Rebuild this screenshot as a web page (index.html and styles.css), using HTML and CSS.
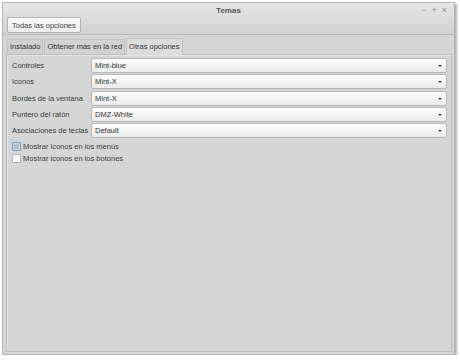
FILE: index.html
```html
<!DOCTYPE html>
<html lang="es">
<head>
  <meta charset="UTF-8">
  <title>Temas</title>
  <link rel="stylesheet" href="styles.css">
</head>
<body>
  <div class="window">
    <div class="header">
      <div class="titlebar">
        <span class="title">Temas</span>
        <div class="controls">
          <span>&minus;</span>
          <span>+</span>
          <span>&times;</span>
        </div>
      </div>
      <div class="toolbar">
        <button class="button">Todas las opciones</button>
      </div>
    </div>
    <div class="body">
      <div class="tabs">
        <div class="tab">Instalado</div>
        <div class="tab">Obtener más en la red</div>
        <div class="tab active">Otras opciones</div>
      </div>
      <div class="panel">
        <div class="form">
          <label>Controles</label>
          <div class="combo">Mint-blue<span class="arrow"></span></div>
          <label>Iconos</label>
          <div class="combo">Mint-X<span class="arrow"></span></div>
          <label>Bordes de la ventana</label>
          <div class="combo">Mint-X<span class="arrow"></span></div>
          <label>Puntero del ratón</label>
          <div class="combo">DMZ-White<span class="arrow"></span></div>
          <label>Asociaciones de teclas</label>
          <div class="combo">Default<span class="arrow"></span></div>
        </div>
        <div class="checks">
          <div class="check"><span class="box checked"></span>Mostrar iconos en los menús</div>
          <div class="check"><span class="box"></span>Mostrar iconos en los botones</div>
        </div>
      </div>
    </div>
  </div>
</body>
</html>
```

FILE: styles.css
```css
body {
  margin: 0;
  background-color: #fff;
  font-family: "Liberation Sans", Arial, sans-serif;
  font-size: 7.5px;
  color: #3c3c3c;
}
.window {
  margin: 2px 0 0 2px;
  width: 451px;
  height: 351px;
  border: 1px solid #b4b4b4;
  background-color: #d6d6d6;
  box-shadow: 2px 2px 2px rgba(0, 0, 0, 0.3);
  display: flex;
  flex-direction: column;
}
.header {
  height: 31px;
  background: linear-gradient(#e6e6e6, #d2d2d2);
  border-bottom: 1px solid #bababa;
  display: flex;
  flex-direction: column;
}
.titlebar {
  height: 14px;
  display: flex;
  align-items: center;
  justify-content: center;
  position: relative;
}
.title {
  font-weight: bold;
  font-size: 8px;
  color: #555;
  padding-top: 1px;
}
.controls {
  position: absolute;
  right: 7px;
  top: 2px;
  display: flex;
  gap: 5px;
  color: #8a8a8a;
  font-size: 9px;
}
.toolbar {
  padding: 0 0 0 4px;
}
.button {
  height: 16px;
  padding: 0 4px;
  border: 1px solid #b3b3b3;
  border-radius: 2px;
  background: linear-gradient(#fbfbfb, #ececec);
  font-family: inherit;
  font-size: 7.5px;
  color: #444;
}
.body {
  flex: 1;
  padding: 3px 2px 2px 3px;
  display: flex;
  flex-direction: column;
}
.tabs {
  display: flex;
  align-items: flex-end;
  gap: 1px;
  padding-left: 1px;
}
.tab {
  height: 14px;
  line-height: 14px;
  padding: 0 2px;
  border: 1px solid #c2c2c2;
  border-bottom: none;
  background-color: #d2d2d2;
  color: #333;
}
.tab.active {
  height: 16px;
  line-height: 16px;
  margin-bottom: -1px;
  background-color: #dcdcdc;
  position: relative;
}
.panel {
  flex: 1;
  border: 1px solid #bdbdbd;
  box-shadow: inset 1px 1px 0 #e4e4e4;
  background-color: #d6d6d6;
  padding: 3px 4px 0 5px;
}
.form {
  display: grid;
  grid-template-columns: 79px 1fr;
  row-gap: 1.3px;
  align-items: center;
}
.form label {
  color: #3a3a3a;
}
.combo {
  height: 13px;
  line-height: 13px;
  padding: 0 3px;
  border: 1px solid #b6b6b6;
  border-radius: 2px;
  background: linear-gradient(#fdfdfd, #ebebeb);
  color: #333;
  position: relative;
}
.arrow {
  position: absolute;
  right: 4px;
  top: 6px;
  border-left: 2px solid transparent;
  border-right: 2px solid transparent;
  border-top: 2px solid #333;
}
.checks {
  margin-top: 4px;
  display: flex;
  flex-direction: column;
  gap: 3px;
}
.check {
  display: flex;
  align-items: center;
  gap: 2px;
  height: 9px;
}
.box {
  width: 7px;
  height: 7px;
  border: 1px solid #b4b4b4;
  background-color: #fafafa;
  border-radius: 1px;
}
.box.checked {
  background-color: #a9c3d8;
  border-color: #7f9db5;
  box-shadow: inset 0 0 0 1px #c9dbe8;
}
```
